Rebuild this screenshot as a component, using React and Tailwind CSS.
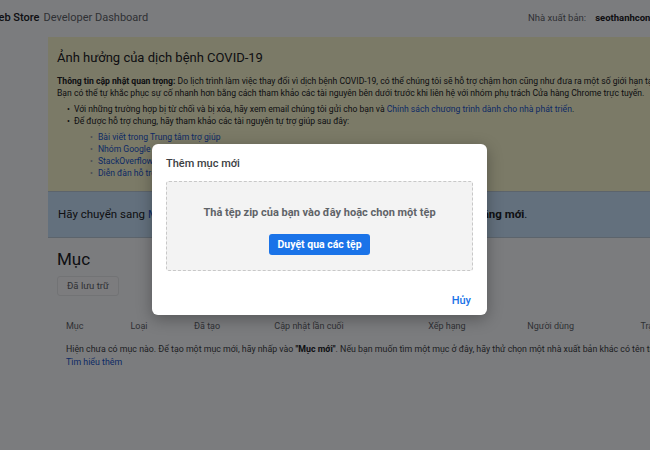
import React from "react";

const font = { fontFamily: "Roboto, 'Noto Sans', Arial, sans-serif" };

function Header() {
  return (
    <div className="flex h-[37px] w-[650px] items-center justify-between">
      <div className="flex items-center gap-[4px] -ml-[11px] text-[11px]">
        <span className="font-medium text-[#202124]">Web Store</span>
        <span className="text-[#5f6368]">Developer Dashboard</span>
      </div>
      <div className="flex w-[122px] shrink-0 items-center gap-[9px] text-[9.5px] whitespace-nowrap">
        <span className="text-[#5f6368]">Nhà xuất bản:</span>
        <span className="font-bold text-[#202124]">seothanhcong.vn</span>
      </div>
    </div>
  );
}

function CovidNotice() {
  return (
    <div className="bg-[#f6f4cd] pl-[9px] pt-[12px] pb-[12px] text-[#202124] whitespace-nowrap">
      <h2 className="text-[13px] leading-[18px] mb-[8px]">Ảnh hưởng của dịch bệnh COVID-19</h2>
      <p className="text-[8.6px] leading-[12px]">
        <b>Thông tin cập nhật quan trọng:</b> Do lịch trình làm việc thay đổi vì dịch bệnh COVID-19, có thể chúng tôi sẽ hỗ trợ chậm hơn cũng như đưa ra một số giới hạn tạm thời.
        <br />
        Bạn có thể tự khắc phục sự cố nhanh hơn bằng cách tham khảo các tài nguyên bên dưới trước khi liên hệ với nhóm phụ trách Cửa hàng Chrome trực tuyến.
      </p>
      <ul className="mt-[4px] pl-[10px] text-[8.6px]">
        <li className="flex h-[12px] items-center gap-[4px]">
          <span>•</span>
          <span>
            Với những trường hợp bị từ chối và bị xóa, hãy xem email chúng tôi gửi cho bạn và{" "}
            <span className="text-[#1a55c8]">Chính sách chương trình dành cho nhà phát triển</span>.
          </span>
        </li>
        <li className="flex h-[12px] items-center gap-[4px]">
          <span>•</span>
          <span>Để được hỗ trợ chung, hãy tham khảo các tài nguyên tự trợ giúp sau đây:</span>
        </li>
      </ul>
      <ul className="mt-[4px] pl-[33px] text-[8.6px] text-[#1a55c8]">
        {["Bài viết trong Trung tâm trợ giúp", "Nhóm Google phụ trách", "StackOverflow", "Diễn đàn hỗ trợ"].map((t) => (
          <li key={t} className="flex h-[12px] items-center gap-[5px]">
            <span className="text-[#9aa0a6]">•</span>
            <span>{t}</span>
          </li>
        ))}
      </ul>
    </div>
  );
}

function MigrationNotice() {
  return (
    <div className="h-[47px] flex items-center border-t border-[#b9c8d6] border-b bg-[#c6e0f8] pl-[10px] text-[11.5px] text-[#202124] whitespace-nowrap">
      <span>
        Hãy chuyển sang <span className="text-[#1a55c8]">Manifest V3</span> ngay bây giờ để được hỗ trợ và trải nghiệm các{" "}
        <b>tính năng mới</b>.
      </span>
    </div>
  );
}

function Items() {
  const cols = [
    ["Mục", "w-[65px]"],
    ["Loại", "w-[64px]"],
    ["Đã tạo", "w-[81px]"],
    ["Cập nhật lần cuối", "w-[155px]"],
    ["Xếp hạng", "w-[100px]"],
    ["Người dùng", "w-[114px]"],
    ["Trạng thái", "w-[60px]"],
  ];
  return (
    <div className="pl-[9px] whitespace-nowrap">
      <h2 className="mt-[11px] text-[17px] leading-[20px] text-[#202124]">Mục</h2>
      <button className="mt-[7px] h-[20px] px-[9px] rounded-[3px] border border-[#e4e6e8] bg-[#f8f9fa] text-[9.5px] text-[#5f6368]">
        Đã lưu trữ
      </button>
      <div className="mt-[24px] ml-[9px] flex text-[9px] text-[#5f6368]">
        {cols.map(([c, w]) => (
          <div key={c} className={w}>{c}</div>
        ))}
      </div>
      <p className="mt-[9px] ml-[9px] text-[8.8px] leading-[13px] text-[#3c4043]">
        Hiện chưa có mục nào. Để tạo một mục mới, hãy nhấp vào <b className="text-[#202124]">"Mục mới"</b>. Nếu bạn muốn tìm một mục ở đây, hãy thử chọn một nhà xuất bản khác có tên trong trình đơn.
        <br />
        <span className="text-[#1a55c8]">Tìm hiểu thêm</span>
      </p>
    </div>
  );
}

function UploadDialog() {
  return (
    <div className="absolute left-[152px] top-[144px] w-[335px] h-[171px] rounded-[6px] bg-white shadow-[0_4px_16px_rgba(0,0,0,0.3)] px-[14px] pt-[13px]">
      <div className="text-[11px] leading-[14px] font-medium text-[#3c4043]">Thêm mục mới</div>
      <div className="mt-[10px] h-[90px] rounded-[3px] border border-dashed border-[#c8c8c8] bg-[#f3f3f3] flex flex-col items-center pt-[24px]">
        <div className="text-[11px] leading-[14px] font-bold text-[#5f6368]">
          Thả tệp zip của bạn vào đây hoặc chọn một tệp
        </div>
        <button className="mt-[14px] h-[21px] w-[101px] rounded-[3px] bg-[#1a73e8] text-white text-[10.5px] font-bold">
          Duyệt qua các tệp
        </button>
      </div>
      <div className="mt-[22px] flex justify-end pr-[2px]">
        <span className="text-[11px] font-medium text-[#1a73e8]">Hủy</span>
      </div>
    </div>
  );
}

export default function App() {
  return (
    <div className="relative w-[650px] h-[450px] overflow-hidden bg-[#f6f8fb]" style={font}>
      <div className="w-[700px]">
        <Header />
        <div className="ml-[48px]">
          <CovidNotice />
          <MigrationNotice />
          <Items />
        </div>
      </div>
      {/* dimmed backdrop behind the dialog */}
      <div className="absolute inset-0 bg-[rgba(0,0,2,0.5)]" />
      <UploadDialog />
    </div>
  );
}
